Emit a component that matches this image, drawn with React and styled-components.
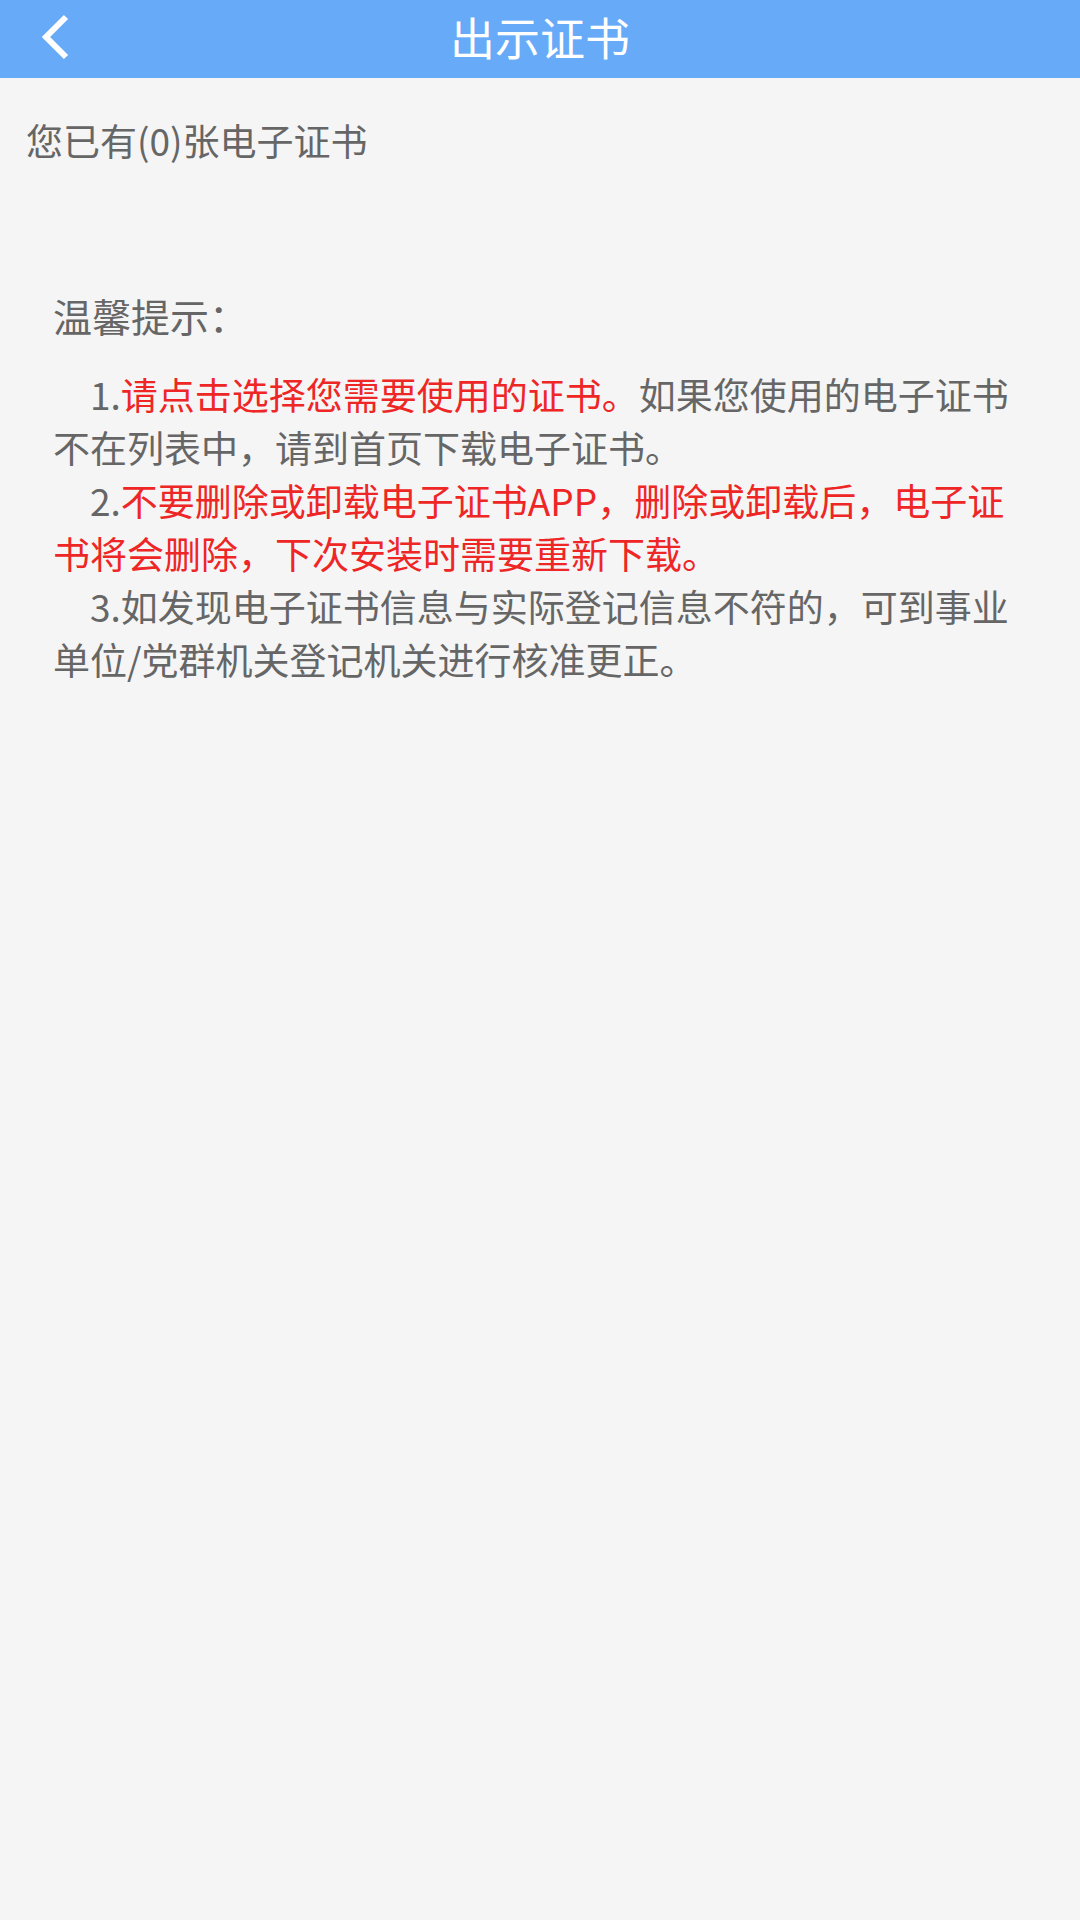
import styled, { createGlobalStyle } from "styled-components";

const GlobalStyle = createGlobalStyle`
  * {
    box-sizing: border-box;
  }

  body {
    margin: 0;
    background: #f5f5f5;
    color: #666;
    font-family: "Noto Sans CJK SC", sans-serif;
    font-size: 37px;
  }
`;

const Header = styled.header`
  display: grid;
  grid-template-columns: 108px 1fr 108px;
  height: 78px;
  background: #66aaf8;
  color: #fff;
`;

const BackButton = styled.button`
  display: flex;
  align-items: center;
  height: 78px;
  padding: 0 0 4px 42px;
  border: 0;
  background: transparent;
  color: inherit;
`;

const Title = styled.h1`
  margin: 0;
  font-size: 45px;
  font-weight: 400;
  line-height: 73px;
  text-align: center;
`;

const Count = styled.p`
  margin: 0;
  padding: 36px 26px 0;
  line-height: 53px;
`;

const Tips = styled.section`
  padding: 120px 53px 0;
`;

const TipsTitle = styled.h2`
  margin: 0 0 25px;
  font-size: 39px;
  font-weight: 400;
  line-height: 56px;
`;

const TipText = styled.p`
  margin: 0;
  line-height: 53px;
  text-indent: 1em;
`;

const Warn = styled.span`
  color: #ee2626;
`;

export default function App() {
    const count = 0;

    return (
        <>
            <GlobalStyle />
            <Header>
                <BackButton type="button" aria-label="返回">
                    <svg width="27" height="46" viewBox="0 0 27 46" fill="none">
                        <path d="M24 3 L4 23 L24 43" stroke="currentColor" strokeWidth="6" />
                    </svg>
                </BackButton>
                <Title>出示证书</Title>
            </Header>

            <main>
                <Count>您已有({count})张电子证书</Count>

                <Tips>
                    <TipsTitle>温馨提示：</TipsTitle>
                    <TipText>
                        1.<Warn>请点击选择您需要使用的证书。</Warn>如果您使用的电子证书不在列表中，请到首页下载电子证书。
                    </TipText>
                    <TipText>
                        2.<Warn>不要删除或卸载电子证书APP，删除或卸载后，电子证书将会删除，下次安装时需要重新下载。</Warn>
                    </TipText>
                    <TipText>
                        3.如发现电子证书信息与实际登记信息不符的，可到事业单位/党群机关登记机关进行核准更正。
                    </TipText>
                </Tips>
            </main>
        </>
    );
}
